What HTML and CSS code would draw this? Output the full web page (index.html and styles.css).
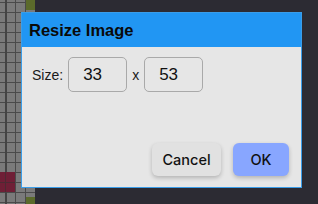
FILE: index.html
```html
<!DOCTYPE html>
<html>
<head>
<meta charset="utf-8">
<link rel="stylesheet" href="styles.css">
</head>
<body>
<div class="stage">
  <div class="canvas">
    <div class="cell olive top"></div>
    <div class="cell red"></div>
    <div class="cell olive bottom"></div>
  </div>
  <div class="dialog">
    <div class="dialog-header">Resize Image</div>
    <div class="dialog-body">
      <div class="size-row">
        <span class="label">Size:</span>
        <div class="field">33</div>
        <span class="times">x</span>
        <div class="field">53</div>
      </div>
      <div class="actions">
        <button class="btn cancel">Cancel</button>
        <button class="btn ok">OK</button>
      </div>
    </div>
  </div>
</div>
</body>
</html>
```
FILE: styles.css
```css
html, body {
  margin: 0;
  padding: 0;
}
body {
  background: #2c2b33;
  width: 318px;
  height: 204px;
  overflow: hidden;
  font-family: "Liberation Sans", Arial, sans-serif;
  color: #111;
}
.stage {
  position: relative;
  width: 318px;
  height: 204px;
}
.canvas {
  position: relative;
  width: 35px;
  height: 204px;
  background-color: #7a7a7a;
  background-image:
    linear-gradient(90deg, #444 2px, transparent 2px),
    linear-gradient(90deg, #4a4a4a 1px, transparent 1px),
    linear-gradient(#4a4a4a 1px, transparent 1px);
  background-size: 35px 204px, 10px 10px, 10px 10px;
  background-position: 5px 0, 5px 0, 0 2px;
  background-repeat: no-repeat, repeat, repeat;
}
.cell {
  position: absolute;
}
.olive {
  background: #5b6a2b;
}
.olive.top {
  left: 26px;
  top: 0;
  width: 9px;
  height: 10px;
}
.olive.bottom {
  left: 26px;
  top: 197px;
  width: 9px;
  height: 7px;
}
.red {
  left: 0;
  top: 172px;
  width: 15px;
  height: 20px;
  background:
    linear-gradient(#4d2a33, #4d2a33) 5px 0 / 1px 100% no-repeat,
    linear-gradient(#4d2a33, #4d2a33) 0 10px / 100% 1px no-repeat,
    #6f1f36;
}
.dialog {
  position: absolute;
  left: 21px;
  top: 12px;
  width: 281px;
  height: 176px;
  box-sizing: border-box;
  border: 1px solid #3a9de9;
  background: #e6e6e6;
  display: flex;
  flex-direction: column;
}
.dialog-header {
  height: 34px;
  background: #2196f3;
  font-weight: bold;
  font-size: 16.5px;
  line-height: 34px;
  padding-left: 7px;
  color: #0a0a0a;
}
.dialog-body {
  flex: 1;
  display: flex;
  flex-direction: column;
  justify-content: space-between;
  padding: 10px 12px 11px 10px;
}
.size-row {
  display: flex;
  align-items: center;
  gap: 5px;
}
.label {
  font-size: 14px;
  color: #1a1a1a;
}
.field {
  box-sizing: border-box;
  width: 59px;
  height: 35px;
  border: 1px solid #a9a9a9;
  border-radius: 5px;
  font-size: 17px;
  line-height: 33px;
  padding-left: 14px;
  color: #111;
}
.times {
  font-size: 14px;
  color: #1a1a1a;
}
.actions {
  display: flex;
  justify-content: flex-end;
  gap: 12px;
}
.btn {
  height: 33px;
  border: none;
  border-radius: 6px;
  font-family: Inter, "Liberation Sans", sans-serif;
  font-weight: 500;
  font-size: 14.5px;
  color: #111;
  padding: 0;
  box-shadow: 0 2px 4px rgba(0, 0, 0, 0.22);
}
.cancel {
  width: 69px;
  background: #e1e1e1;
}
.ok {
  width: 56px;
  background: #88a6ff;
}
```
